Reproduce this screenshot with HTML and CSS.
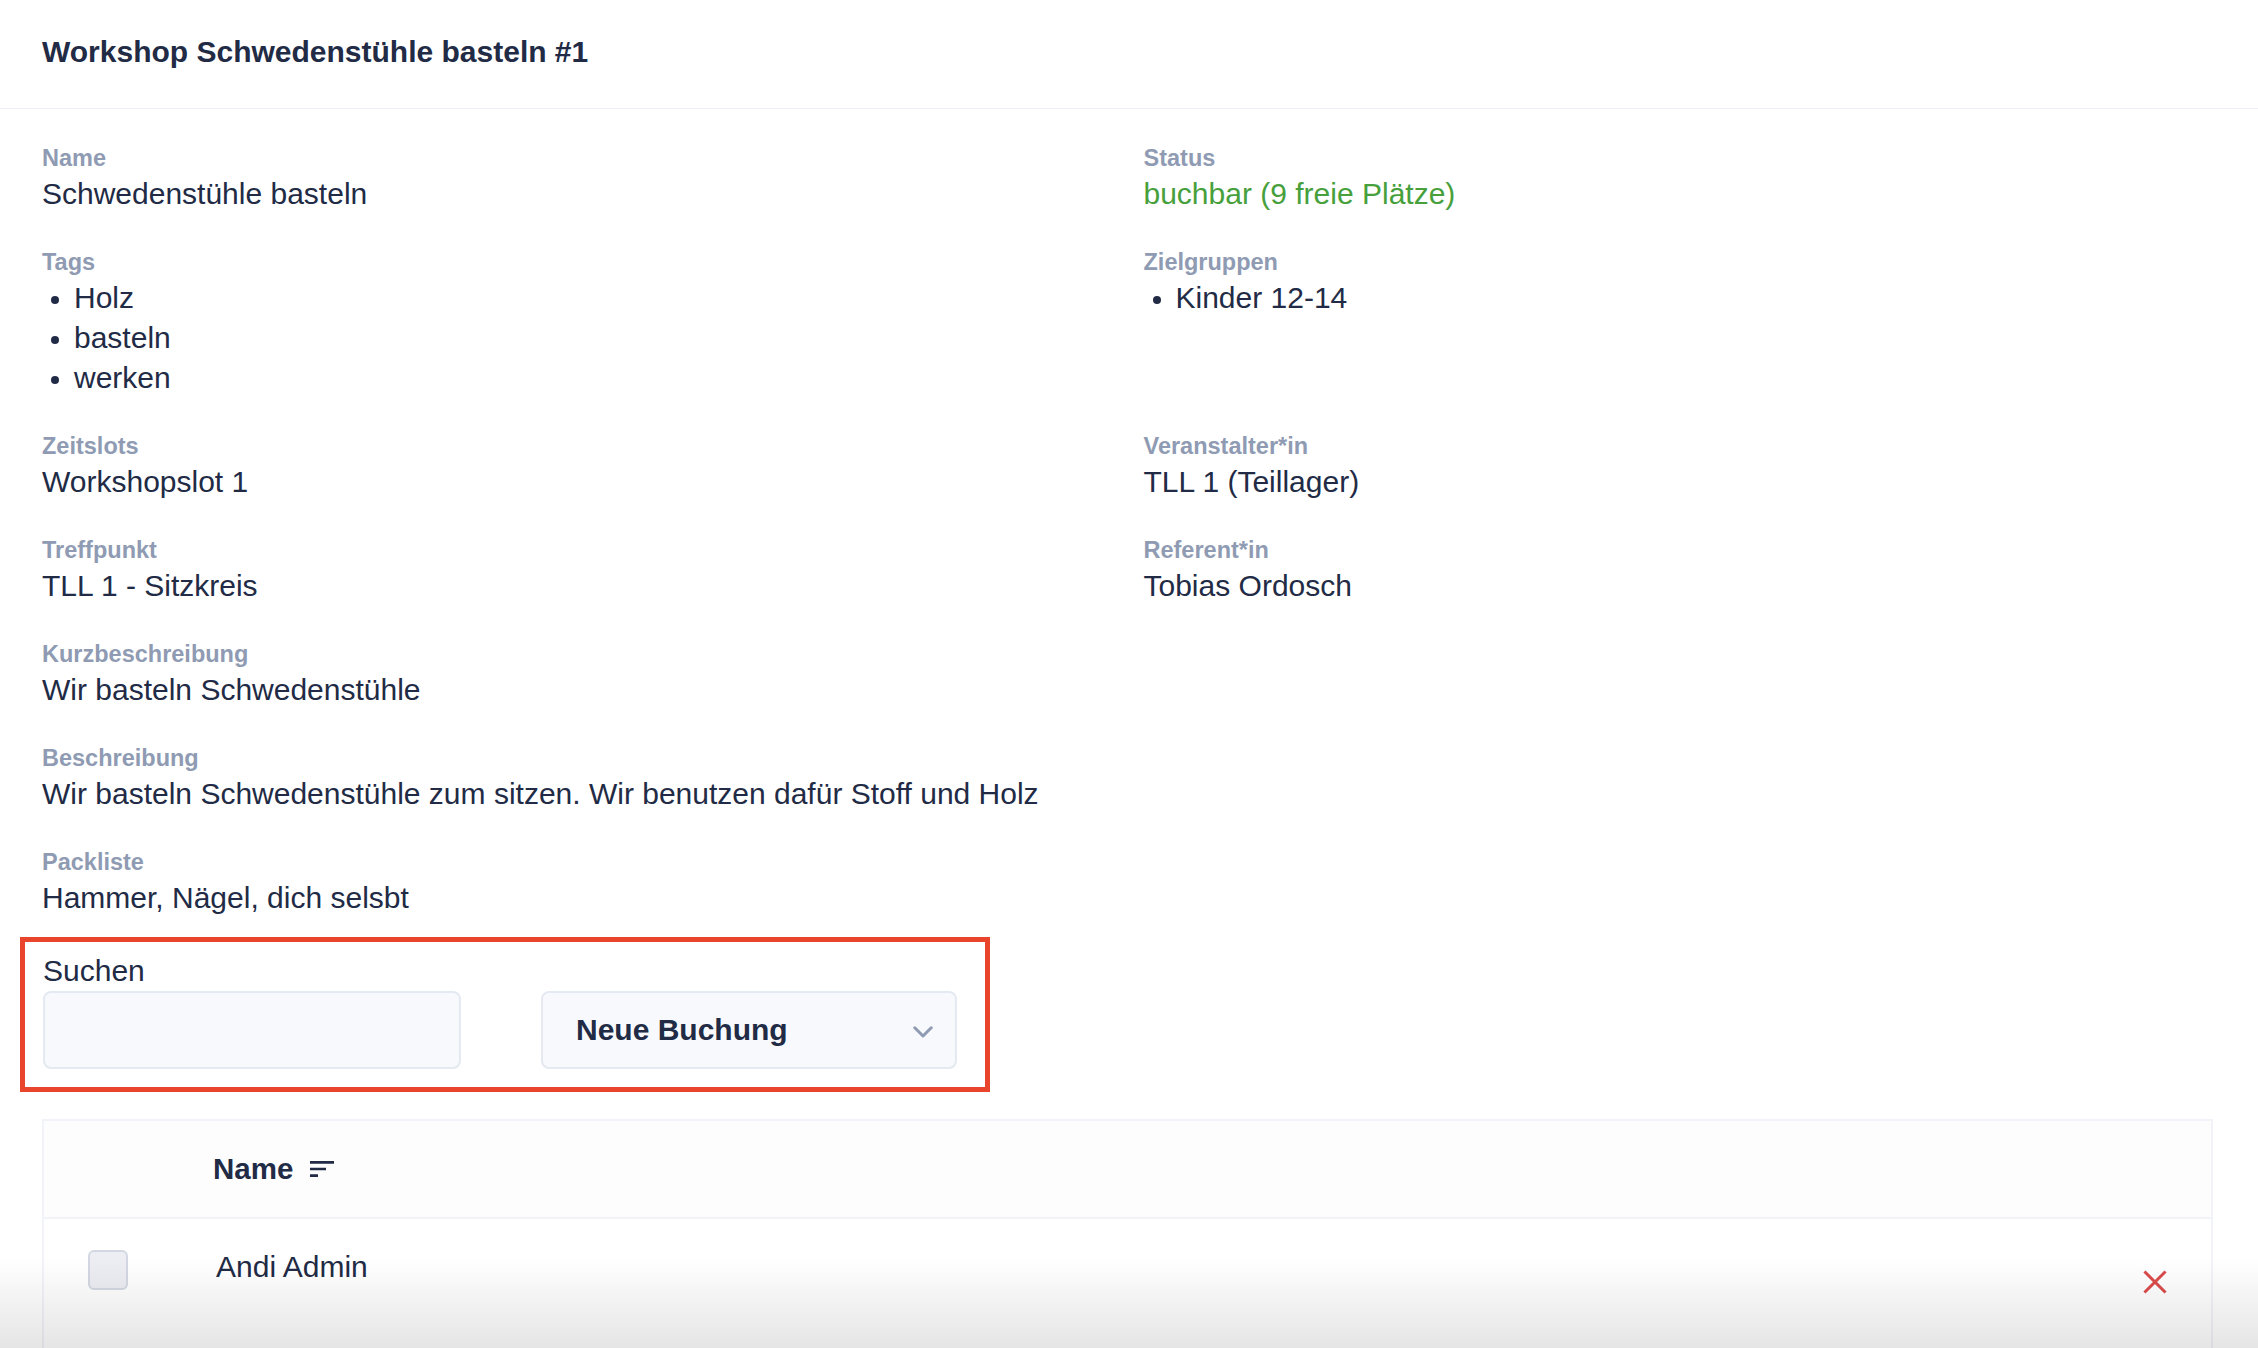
FILE: index.html
```html
<!DOCTYPE html>
<html lang="de">
<head>
<meta charset="utf-8">
<title>Workshop Schwedenstühle basteln #1</title>
<link rel="stylesheet" href="styles.css">
</head>
<body>
<div class="card">
  <div class="card-header">
    <h1 class="title">Workshop Schwedenstühle basteln #1</h1>
  </div>
  <div class="card-body">
    <div class="fields">
      <div class="field">
        <div class="label">Name</div>
        <div class="value">Schwedenstühle basteln</div>
      </div>
      <div class="field">
        <div class="label">Status</div>
        <div class="value success">buchbar (9 freie Plätze)</div>
      </div>
      <div class="field">
        <div class="label">Tags</div>
        <ul class="list">
          <li>Holz</li>
          <li>basteln</li>
          <li>werken</li>
        </ul>
      </div>
      <div class="field">
        <div class="label">Zielgruppen</div>
        <ul class="list">
          <li>Kinder 12-14</li>
        </ul>
      </div>
      <div class="field">
        <div class="label">Zeitslots</div>
        <div class="value">Workshopslot 1</div>
      </div>
      <div class="field">
        <div class="label">Veranstalter*in</div>
        <div class="value">TLL 1 (Teillager)</div>
      </div>
      <div class="field">
        <div class="label">Treffpunkt</div>
        <div class="value">TLL 1 - Sitzkreis</div>
      </div>
      <div class="field">
        <div class="label">Referent*in</div>
        <div class="value">Tobias Ordosch</div>
      </div>
      <div class="field left">
        <div class="label">Kurzbeschreibung</div>
        <div class="value">Wir basteln Schwedenstühle</div>
      </div>
      <div class="field left">
        <div class="label">Beschreibung</div>
        <div class="value">Wir basteln Schwedenstühle zum sitzen. Wir benutzen dafür Stoff und Holz</div>
      </div>
      <div class="field left">
        <div class="label">Packliste</div>
        <div class="value">Hammer, Nägel, dich selsbt</div>
      </div>
    </div>

    <div class="search-box">
      <div class="search-field">
        <label class="search-label" for="q">Suchen</label>
        <input class="input" id="q" type="text">
      </div>
      <div class="select">
        <span class="select-text">Neue Buchung</span>
        <svg class="chevron" width="20" height="12" viewBox="0 0 20 12"><polyline points="1.8,1.8 10,10 18.2,1.8" fill="none" stroke="#8f9bb3" stroke-width="3" stroke-linecap="round" stroke-linejoin="round"/></svg>
      </div>
    </div>

    <div class="table">
      <div class="thead">
        <div class="th-check"></div>
        <div class="th-name">
          <span>Name</span>
          <svg class="sort-icon" width="32" height="32" viewBox="0 0 24 24"><path d="M3 18h6v-2H3v2zM3 6v2h18V6H3zm0 7h12v-2H3v2z" fill="#222b45"/></svg>
        </div>
        <div class="th-actions"></div>
      </div>
      <div class="tr">
        <div class="td-check"><span class="checkbox"></span></div>
        <div class="td-name">Andi Admin</div>
        <div class="td-actions">
          <svg class="close-icon" width="24" height="24" viewBox="0 0 24 24"><path d="M2.5 2.5 L21.5 21.5 M21.5 2.5 L2.5 21.5" stroke="#db4b4b" stroke-width="3" stroke-linecap="square" fill="none"/></svg>
        </div>
      </div>
    </div>
  </div>
</div>
<div class="bottom-shade"></div>
</body>
</html>
```

FILE: styles.css
```css
* {
  box-sizing: border-box;
}

html, body {
  margin: 0;
  padding: 0;
  background: #ffffff;
}

body {
  font-family: "Liberation Sans", Arial, Helvetica, sans-serif;
  color: #222b45;
  overflow: hidden;
}

.card {
  background: #ffffff;
}

.card-header {
  padding: 34px 43px 38px 42px;
  border-bottom: 1px solid #edf1f7;
}

.title {
  margin: 0;
  font-size: 30px;
  line-height: 36px;
  font-weight: 700;
  color: #222b45;
}

.card-body {
  padding: 33px 45px 0 42px;
}

.fields {
  display: grid;
  grid-template-columns: 1fr 1fr;
  column-gap: 32px;
  row-gap: 32px;
}

.field.left {
  grid-column: 1;
}

.label {
  font-size: 23.5px;
  line-height: 32px;
  font-weight: 700;
  color: #8f9bb3;
}

.value {
  font-size: 30px;
  line-height: 40px;
  color: #222b45;
}

.value.success {
  color: #47a03c;
}

.list {
  margin: 0;
  padding: 0 0 0 32px;
  font-size: 30px;
  line-height: 40px;
  list-style: disc;
}

.list li::marker {
  font-size: 26px;
}

.search-box {
  display: flex;
  align-items: flex-end;
  gap: 80px;
  width: 970px;
  margin: 19px 0 0 -22px;
  padding: 9px 28px 18px 18px;
  border: 5px solid #e8452c;
}

.search-field {
  display: flex;
  flex-direction: column;
  width: 418px;
}

.search-label {
  font-size: 30px;
  line-height: 40px;
  color: #222b45;
}

.input {
  width: 418px;
  height: 78px;
  margin: 0;
  border: 2px solid #e4e9f2;
  border-radius: 8px;
  background: #f7f9fc;
  font-family: inherit;
  font-size: 30px;
  outline: none;
}

.select {
  width: 416px;
  height: 78px;
  display: flex;
  align-items: center;
  justify-content: space-between;
  padding: 0 22px 0 33px;
  border: 2px solid #e4e9f2;
  border-radius: 8px;
  background: #f7f9fc;
}

.select-text {
  font-size: 30px;
  font-weight: 700;
  color: #222b45;
}

.chevron {
  display: block;
  margin-top: 4px;
}

.table {
  margin-top: 27px;
  border: 2px solid #f1f3f8;
  border-bottom: none;
}

.thead,
.tr {
  display: grid;
  grid-template-columns: 169px 1fr 112px;
}

.thead {
  height: 98px;
  align-items: center;
  border-bottom: 2px solid #f1f3f8;
  background: #fdfdfe;
}

.th-name {
  display: flex;
  align-items: center;
  gap: 13px;
  font-size: 29.5px;
  font-weight: 700;
  color: #222b45;
}

.sort-icon {
  display: block;
}

.tr {
  min-height: 140px;
  align-items: start;
}

.td-check {
  padding: 31px 0 0 44px;
}

.checkbox {
  display: block;
  width: 40px;
  height: 40px;
  border: 2px solid #d3d8e2;
  border-radius: 6px;
  background: #eceef3;
}

.td-name {
  padding: 28px 0 0 3px;
  font-size: 30px;
  line-height: 40px;
  color: #222b45;
}

.td-actions {
  display: flex;
  justify-content: flex-end;
  padding: 51px 44px 0 0;
}

.close-icon {
  display: block;
}

.bottom-shade {
  position: fixed;
  left: 0;
  right: 0;
  bottom: 0;
  height: 90px;
  background: linear-gradient(to bottom, rgba(0, 0, 0, 0), rgba(0, 0, 0, 0.1));
  pointer-events: none;
}
```
